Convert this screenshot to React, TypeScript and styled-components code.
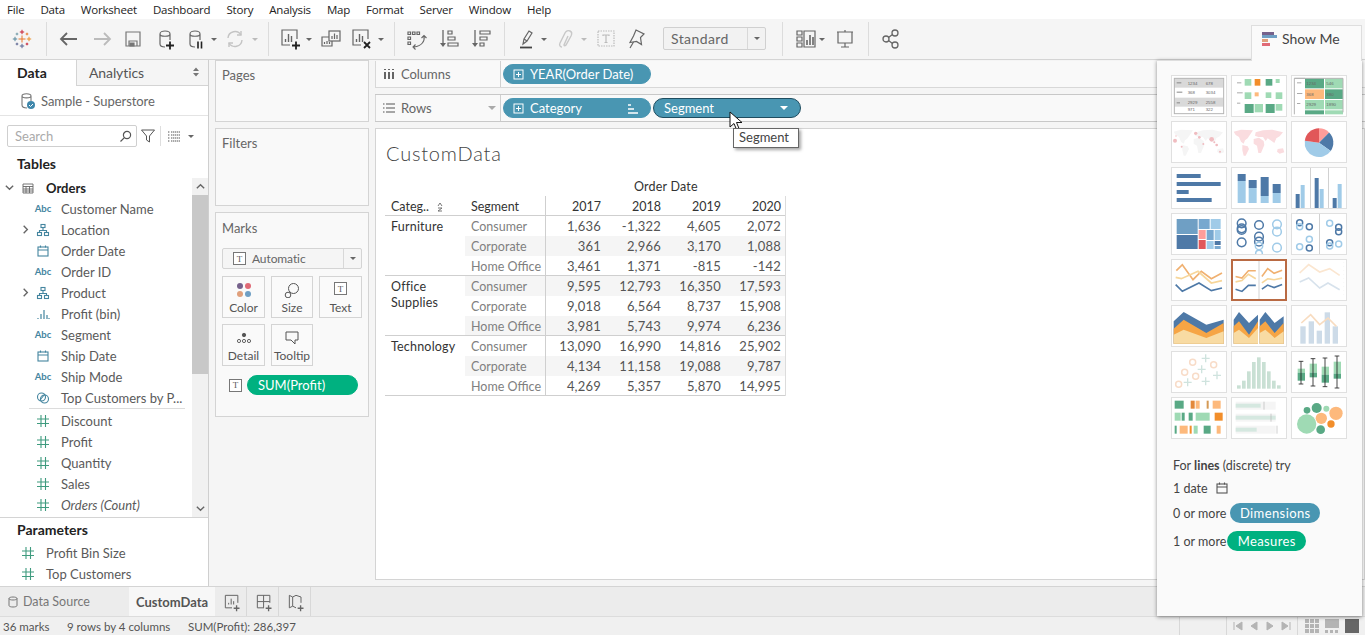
import type { ReactNode } from "react";
import styled, { createGlobalStyle } from "styled-components";

const GlobalStyle = createGlobalStyle`
  html, body {
    margin: 0;
    padding: 0;
    background: #fff;
  }
  * {
    box-sizing: border-box;
  }
`;

const BODY_FONT = `Lato, "Open Sans", Arial, sans-serif`;

const Root = styled.div`
  position: relative;
  width: 1365px;
  height: 635px;
  overflow: hidden;
  display: grid;
  grid-template-rows: 19px 41px 526px 30px 19px;
  font-family: ${BODY_FONT};
  font-size: 13px;
  color: #555;
`;

/* ---------- menu + toolbar ---------- */

const MenuBar = styled.div`
  display: flex;
  align-items: center;
  padding-left: 7px;
  gap: 16px;
  background: #fff;
  font-family: "Open Sans", sans-serif;
  font-size: 11.5px;
  letter-spacing: -0.2px;
  color: #222;
`;

const Toolbar = styled.div`
  display: flex;
  align-items: center;
  padding-left: 10px;
  background: #f5f5f5;
  border-bottom: 1px solid #d4d4d4;
`;

const Tool = styled.div<{ $ml?: number; $w?: number }>`
  flex: none;
  display: flex;
  align-items: center;
  justify-content: center;
  width: ${(p) => p.$w ?? 24}px;
  height: 24px;
  margin-left: ${(p) => p.$ml ?? 0}px;
`;

const ToolSep = styled.div<{ $ml: number }>`
  flex: none;
  width: 1px;
  height: 34px;
  margin-left: ${(p) => p.$ml}px;
  background: #dcdcdc;
`;

const Caret = styled.span<{ $color?: string; $size?: number; $mr?: number }>`
  display: inline-block;
  width: 0;
  height: 0;
  margin-right: ${(p) => p.$mr ?? 0}px;
  border-left: ${(p) => p.$size ?? 3}px solid transparent;
  border-right: ${(p) => p.$size ?? 3}px solid transparent;
  border-top: ${(p) => p.$size ?? 3}px solid ${(p) => p.$color ?? "#666"};
`;

const Combo = styled.div`
  flex: none;
  display: flex;
  align-items: center;
  width: 103px;
  height: 23px;
  margin: 0 0 1px 15px;
  border: 1px solid #d0d0d0;
  border-radius: 2px;
  background: #f2f2f2;
  font-size: 14px;
  letter-spacing: 0.4px;
  color: #666;
`;

const ComboText = styled.span`
  flex: 1;
  padding-left: 7px;
`;

const ComboBtn = styled.span`
  display: flex;
  align-items: center;
  justify-content: center;
  width: 18px;
  height: 100%;
  border-left: 1px solid #d8d8d8;
`;

/* ---------- main area ---------- */

const Main = styled.div`
  display: flex;
  min-height: 0;
  background: #f5f5f5;
`;

const DataPane = styled.div`
  flex: none;
  display: flex;
  flex-direction: column;
  width: 209px;
  background: #fff;
  border-right: 1px solid #cfcfcf;
`;

const PaneTabs = styled.div`
  display: flex;
  height: 26px;
  flex: none;
`;

const DataTab = styled.div`
  width: 76px;
  padding: 4px 0 0 17px;
  font-size: 14px;
  font-weight: 700;
  color: #222;
`;

const AnalyticsTab = styled.div`
  flex: 1;
  display: flex;
  justify-content: space-between;
  padding: 4px 8px 0 12px;
  background: #f5f5f5;
  border-left: 1px solid #d4d4d4;
  border-bottom: 1px solid #d4d4d4;
  font-size: 14px;
  letter-spacing: -0.1px;
  color: #555;
`;

const SourceRow = styled.div`
  flex: none;
  display: flex;
  align-items: center;
  gap: 5px;
  height: 30px;
  padding-left: 20px;
  border-bottom: 1px solid #e4e4e4;
  letter-spacing: -0.05px;
  color: #666;
`;

const SearchRow = styled.div`
  flex: none;
  display: flex;
  align-items: center;
  height: 39px;
  padding: 1px 0 0 7px;
`;

const SearchBox = styled.div`
  display: flex;
  align-items: center;
  justify-content: space-between;
  width: 130px;
  height: 22px;
  padding: 0 4px 0 7px;
  border: 1px solid #cfcfcf;
  border-radius: 2px;
  color: #aaa;
`;

const VSep = styled.span`
  width: 1px;
  height: 20px;
  margin: 0 6px 0 4px;
  background: #dedede;
`;

const SectionTitle = styled.div`
  flex: none;
  height: 22px;
  padding-left: 17px;
  font-size: 14px;
  line-height: 18px;
  font-weight: 700;
  color: #222;
`;

const ParamsTitle = styled(SectionTitle)`
  height: 21px;
`;

const FieldsArea = styled.div`
  flex: none;
  display: flex;
  height: 341px;
  border-bottom: 1px solid #d4d4d4;
`;

const FieldList = styled.div`
  flex: 1;
  min-width: 0;
`;

const FieldRow = styled.div<{ $indent?: number }>`
  display: flex;
  align-items: center;
  height: 21px;
  padding-left: ${(p) => p.$indent ?? 34}px;
  position: relative;
  white-space: nowrap;
`;

const FieldIcon = styled.span`
  flex: none;
  display: flex;
  align-items: center;
  justify-content: center;
  width: 18px;
  margin-right: 9px;
`;

const AbcIcon = styled.span`
  font-size: 9.5px;
  font-weight: 700;
  color: #44859f;
  letter-spacing: -0.1px;
`;

const FieldName = styled.span<{ $italic?: boolean; $bold?: boolean }>`
  font-style: ${(p) => (p.$italic ? "italic" : "normal")};
  font-weight: ${(p) => (p.$bold ? 700 : 400)};
  color: ${(p) => (p.$bold ? "#222" : "#5a5a5a")};
`;

const Expander = styled.span<{ $left?: number }>`
  position: absolute;
  left: ${(p) => p.$left ?? 20}px;
  top: 5px;
  display: flex;
`;

const FieldDivider = styled.div`
  height: 1px;
  margin: 0 0 1px 29px;
  width: 156px;
  background: #dcdcdc;
`;

const ScrollTrack = styled.div`
  flex: none;
  display: flex;
  flex-direction: column;
  width: 16px;
  margin-top: 1px;
  background: #f1f1f1;
`;

const ScrollEnd = styled.div`
  flex: none;
  display: flex;
  align-items: center;
  justify-content: center;
  height: 17px;
`;

const ScrollThumb = styled.div`
  flex: none;
  height: 179px;
  background: #c8c8c8;
`;

const ScrollRest = styled.div`
  flex: 1;
`;

const ParamsArea = styled.div`
  flex: 1;
  padding-top: 3px;
`;

/* ---------- cards column ---------- */

const CardsColumn = styled.div`
  flex: none;
  display: flex;
  flex-direction: column;
  width: 166px;
  padding: 0 6px;
  gap: 6px;
`;

const Card = styled.div<{ $h: number; $pt?: number }>`
  flex: none;
  height: ${(p) => p.$h}px;
  padding: ${(p) => p.$pt ?? 6}px 6px 0;
  background: #f9f9f9;
  border: 1px solid #d4d4d4;
  color: #666;
`;

const MarksType = styled.div`
  display: flex;
  align-items: center;
  width: 140px;
  height: 21px;
  margin-top: 12px;
  border: 1px solid #d4d4d4;
  border-radius: 2px;
  background: #f5f5f5;
  font-size: 12px;
  letter-spacing: -0.1px;
  color: #666;
`;

const MarksTypeLabel = styled.span`
  flex: 1;
  display: flex;
  align-items: center;
  gap: 6px;
  padding-left: 10px;
`;

const MarksTypeBtn = styled.span`
  display: flex;
  align-items: center;
  justify-content: center;
  width: 18px;
  height: 100%;
  border-left: 1px solid #d8d8d8;
`;

const MarksGrid = styled.div`
  display: grid;
  grid-template-columns: 43px 42px 43px;
  grid-auto-rows: 42px;
  column-gap: 6px;
  row-gap: 6px;
  margin-top: 7px;
`;

const MarkButton = styled.div`
  display: flex;
  flex-direction: column;
  align-items: center;
  justify-content: space-between;
  padding: 5px 0 2px;
  border: 1px solid #d4d4d4;
  background: #fafafa;
  font-size: 12px;
  color: #555;
`;

const MarkField = styled.div`
  display: flex;
  align-items: center;
  gap: 5px;
  margin: 9px 0 0 7px;
`;

const TBox = styled.span<{ $size?: number }>`
  display: inline-flex;
  align-items: center;
  justify-content: center;
  width: ${(p) => p.$size ?? 13}px;
  height: ${(p) => p.$size ?? 13}px;
  border: 1px solid #777;
  font-family: "Liberation Serif", serif;
  font-size: ${(p) => (p.$size ?? 13) - 4}px;
  color: #555;
  background: #fff;
`;

const Pill = styled.div<{
  $w: number;
  $tone: "blue" | "green";
  $active?: boolean;
}>`
  flex: none;
  display: flex;
  align-items: center;
  gap: 6px;
  width: ${(p) => p.$w}px;
  height: 20px;
  padding: 0 11px 0 10px;
  border-radius: 10px;
  border: 1px solid
    ${(p) =>
      p.$active ? "#1f4d60" : p.$tone === "blue" ? "#4996b2" : "#00b180"};
  background: ${(p) => (p.$tone === "blue" ? "#4996b2" : "#00b180")};
  color: #fff;
  font-size: 13px;
  white-space: nowrap;
`;

const PillIcon = styled.span`
  display: flex;
  margin-left: -1px;
`;

const PillSpacer = styled.span`
  flex: 1;
`;

/* ---------- workspace ---------- */

const Workspace = styled.div`
  flex: 1;
  min-width: 0;
  display: flex;
  flex-direction: column;
  padding-top: 1px;
`;

const Shelf = styled.div<{ $h: number; $dark?: boolean }>`
  flex: none;
  display: flex;
  height: ${(p) => p.$h}px;
  margin-bottom: 6px;
  background: #f9f9f9;
  border-top: ${(p) => (p.$dark ? "1px solid #c8c8c8" : "none")};
  border-bottom: 1px solid ${(p) => (p.$dark ? "#c8c8c8" : "#d8d8d8")};
`;

const ShelfLabel = styled.div`
  flex: none;
  display: flex;
  align-items: center;
  gap: 5px;
  width: 126px;
  padding: 0 4px 0 6px;
  border-right: 1px solid #d0d0d0;
  border-left: 1px solid #d8d8d8;
  letter-spacing: -0.05px;
  color: #666;
`;

const ShelfPills = styled.div`
  display: flex;
  align-items: center;
  gap: 2px;
  padding-left: 2px;
`;

const View = styled.div`
  flex: none;
  height: 452px;
  padding: 11px 0 0 9px;
  background: #fff;
  border: 1px solid #d4d4d4;
`;

const ViewTitle = styled.div`
  height: 39px;
  padding-left: 1px;
  font-size: 20px;
  font-weight: 300;
  line-height: 26px;
  letter-spacing: 0.8px;
  color: #444;
`;

const TopHeader = styled.div`
  width: 400px;
  height: 17px;
  padding-left: 249px;
  font-size: 12.5px;
  line-height: 16px;
  letter-spacing: 0.2px;
  color: #333;
`;

const CrossTab = styled.div`
  display: grid;
  grid-template-columns: 80px 81px 59px 60px 60px 60px;
  grid-auto-rows: 20px;
  width: 401px;
  border-right: 1px solid #dcdcdc;
`;

const HeadCell = styled.div<{ $right?: boolean; $rule?: boolean }>`
  display: flex;
  align-items: center;
  justify-content: ${(p) => (p.$right ? "flex-end" : "flex-start")};
  gap: 6px;
  padding: 2px 4px 0 ${(p) => (p.$right ? 0 : "6px")};
  border-bottom: 1px solid #cfcfcf;
  border-right: ${(p) => (p.$rule ? "1px solid #cfcfcf" : "none")};
  font-size: 12.5px;
  color: #333;
`;

const CategoryCell = styled.div`
  grid-row: span 3;
  padding: 3px 0 0 6px;
  border-bottom: 1px solid #cfcfcf;
  font-size: 12.5px;
  line-height: 16px;
  letter-spacing: 0.2px;
  color: #333;
`;

const SegmentCell = styled.div<{ $band: boolean; $end: boolean }>`
  display: flex;
  align-items: center;
  padding-left: 6px;
  padding-top: ${(p) => (p.$end ? 1 : 0)}px;
  background: ${(p) => (p.$band ? "#f5f5f5" : "#fff")};
  border-right: 1px solid #cfcfcf;
  border-bottom: ${(p) => (p.$end ? "1px solid #cfcfcf" : "none")};
  font-size: 12.5px;
  color: #808080;
`;

const ValueCell = styled.div<{ $band: boolean; $end: boolean }>`
  display: flex;
  align-items: center;
  justify-content: flex-end;
  padding-right: 4px;
  padding-top: ${(p) => (p.$end ? 1 : 0)}px;
  background: ${(p) => (p.$band ? "#f5f5f5" : "#fff")};
  border-bottom: ${(p) => (p.$end ? "1px solid #cfcfcf" : "none")};
  font-size: 13px;
  letter-spacing: 0.2px;
  color: #555;
`;

/* ---------- show me ---------- */

const ShowMeWrap = styled.div`
  position: absolute;
  left: 1157px;
  top: 25px;
  width: 205px;
  height: 591px;
  display: flex;
  flex-direction: column;
  align-items: flex-end;
`;

const ShowMeTab = styled.div`
  flex: none;
  display: flex;
  align-items: center;
  gap: 4px;
  width: 111px;
  height: 36px;
  margin-bottom: -1px;
  padding: 0 0 10px 10px;
  background: #fafafa;
  border: 1px solid #dedede;
  border-bottom: none;
  position: relative;
  z-index: 1;
  font-size: 14px;
  color: #444;
`;

const ShowMeBody = styled.div`
  flex: 1;
  width: 100%;
  padding: 14px 0 0 14px;
  background: #fafafa;
  border-top: 1px solid #dedede;
  box-shadow: 0 1px 4px rgba(0, 0, 0, 0.45);
`;

const ThumbGrid = styled.div`
  display: grid;
  grid-template-columns: repeat(3, 56px);
  grid-auto-rows: 42px;
  gap: 4px;
`;

const Thumb = styled.div<{ $selected?: boolean }>`
  background: #fff;
  border: ${(p) =>
    p.$selected ? "2px solid #b96a43" : "1px solid #e0e0e0"};
  svg {
    display: block;
    width: 100%;
    height: 100%;
  }
`;

const Hint = styled.div`
  margin-top: 16px;
  padding-left: 2px;
  color: #444;
  font-size: 12.5px;
`;

const HintLine = styled.div<{ $mt: number; $gap?: number }>`
  display: flex;
  align-items: center;
  gap: ${(p) => p.$gap ?? 4}px;
  height: 20px;
  margin-top: ${(p) => p.$mt}px;
`;

const HintPill = styled.span<{ $w: number; $tone: "blue" | "green" }>`
  display: flex;
  align-items: center;
  justify-content: center;
  width: ${(p) => p.$w}px;
  height: 20px;
  border-radius: 10px;
  background: ${(p) => (p.$tone === "blue" ? "#4996b2" : "#00b180")};
  color: #fff;
  font-size: 13px;
  letter-spacing: 0.4px;
`;

/* ---------- bottom ---------- */

const SheetTabs = styled.div`
  display: flex;
  background: #ececec;
  border-top: 1px solid #d4d4d4;
`;

const DataSourceTab = styled.div`
  display: flex;
  align-items: center;
  gap: 3px;
  width: 129px;
  padding-left: 6px;
  font-size: 12.5px;
  color: #777;
`;

const SheetTab = styled.div`
  display: flex;
  align-items: center;
  justify-content: center;
  width: 86px;
  background: #f7f7f7;
  font-weight: 700;
  color: #555;
`;

const NewSheet = styled.div`
  display: flex;
  align-items: center;
  justify-content: center;
  width: 32px;
  padding-left: 2px;
  border-right: 1px solid #d8d8d8;
`;

const StatusBar = styled.div`
  display: flex;
  align-items: center;
  padding-left: 3px;
  background: #f0f0f0;
  border-top: 1px solid #dcdcdc;
  font-size: 11.5px;
  color: #555;
`;

const StatusText = styled.span<{ $w: number }>`
  width: ${(p) => p.$w}px;
  white-space: nowrap;
`;

const StatusSpacer = styled.div`
  flex: 1;
  align-self: stretch;
`;

const StatusCell = styled.div<{ $w: number }>`
  display: flex;
  align-items: center;
  justify-content: center;
  gap: 6px;
  width: ${(p) => p.$w}px;
  align-self: stretch;
  border-left: 1px solid #d8d8d8;
`;

/* ---------- overlays ---------- */

const Cursor = styled.svg`
  position: absolute;
  left: 729px;
  top: 111px;
`;

const Tip = styled.div`
  position: absolute;
  left: 733px;
  top: 128px;
  width: 66px;
  height: 20px;
  padding-left: 5px;
  background: #fff;
  border: 1px solid #666;
  box-shadow: 2px 2px 3px rgba(0, 0, 0, 0.35);
  font-size: 13px;
  line-height: 17px;
  color: #444;
`;

/* ---------- icons ---------- */

const I = ({ c = "#666", w = 1.2, s = 24, vb = 24, children }: { c?: string; w?: number; s?: number; vb?: number; children: ReactNode }) => (
  <svg width={s} height={s} viewBox={`0 0 ${vb} ${vb}`} fill="none" stroke={c} strokeWidth={w}>
    {children}
  </svg>
);

const logoMarks: [number, number, number, string][] = [
  [12, 12, 3.5, "#e8762b"],
  [12, 5, 2.2, "#c72035"],
  [12, 19, 2.2, "#5b6591"],
  [5, 12, 2.2, "#59879b"],
  [19, 12, 2.2, "#eb912b"],
  [7, 7, 1.3, "#7099a6"],
  [17, 7, 1.3, "#e8762b"],
  [7, 17, 1.3, "#5b6591"],
  [17, 17, 1.3, "#c72035"],
];

const LogoIcon = () => (
  <I w={1}>
    {logoMarks.map(([x, y, a, col]) => (
      <path key={`${x}-${y}`} d={`M${x - a} ${y}H${x + a}M${x} ${y - a}V${y + a}`} stroke={col} />
    ))}
  </I>
);

const CylinderPath = "M7 7c0-4 10-4 10 0v6M7 7c0 3 10 3 10 0M7 7v10c0 2 2 3 5 3";

const DsPlus = () => (
  <I>
    <path d={CylinderPath} />
    <path d="M13 18.500h8M17 14.500v8" stroke="#222" strokeWidth={1.8} />
  </I>
);

const DsPause = () => (
  <I>
    <path d={CylinderPath} />
    <path d="M15 14.500v7M18.500 14.500v7" stroke="#222" strokeWidth={1.6} />
  </I>
);

const Refresh = () => (
  <I c="#c4c4c4" w={1.4}>
    <path d="M5 11a7 7 0 0 1 13-3M19 13a7 7 0 0 1-13 3" />
    <path d="M18 4v4h-4M6 20v-4h4" />
  </I>
);

const ChartBox = ({ children }: { children?: ReactNode }) => (
  <I>
    <path d="M19 12V3H4v15h8" />
    <path d="M7.500 15v-3M10.500 15V7M13.500 15v-6" strokeWidth={1.4} />
    {children}
  </I>
);

const DupIcon = () => (
  <I>
    <rect x="10" y="4" width="11" height="10" />
    <path d="M13 12V9M15.500 12V6.500M18 12V8" />
    <path d="M10 10H3v9h10v-5" />
    <path d="M5.500 17v-2M8 17v-3M10.500 17v-2" />
  </I>
);

const SwapIcon = () => (
  <I>
    <path d="M4 5h2.500v2.500H4zM8.500 5H11v2.500H8.500zM13 5h2.500v2.500H13zM4 10h2.500v2.500H4zM4 15h2.500v2.500H4z" />
    <path d="M20 9c1 5-2 10-10 11M11.500 17.500l-2.500 2.500 2.500 2.500M17.500 11l2.500-2.500 2.500 2.500" strokeWidth={1.1} />
  </I>
);

const SortIcon = ({ desc }: { desc?: boolean }) => (
  <I>
    <path d="M6 3v15" strokeWidth={1.3} />
    <path d="M3 16h6l-3 4z" fill="#666" stroke="none" />
    {desc ? (
      <path d="M11 4h10v3H11zM11 10h7v3h-7zM11 16h4v3h-4z" />
    ) : (
      <path d="M11 4h4v3h-4zM11 10h7v3h-7zM11 16h10v3H11z" />
    )}
  </I>
);

const Highlighter = () => (
  <I>
    <path d="M8 17l1-5 5-8 3 2-5 8zM9 12l3 2" />
    <path d="M5 20.500h12" stroke="#444" strokeWidth={1.8} />
  </I>
);

const Clip = () => (
  <I c="#c8c8c8" w={1.4}>
    <path d="M9 20c-2 0-3-2-2-4l5-10c1-2 3-3 5-2s2 3 1 5l-5 9c-1 1-2 1-2 0l4-9" />
  </I>
);

const TDashed = () => (
  <I c="#bbb">
    <rect x="4" y="4" width="16" height="15" strokeDasharray="1.500 1" />
    <path d="M9 9V8h6v1M12 8v7.500M10.500 15.500h3" />
  </I>
);

const Pin = () => (
  <I>
    <path d="M12 3l8 4-3.500 3.500 1 7-5-3-6.500 1 3.500-6.500z" />
    <path d="M9.500 15l-3.500 6" />
  </I>
);

const ShowMeSmall = () => (
  <I>
    <path d="M3 4h5v4H3zM3 10h5v4H3zM3 16h5v4H3z" />
    <path d="M10 4h11v16H10z" />
    <path d="M13 18v-5M16 18V8M19 18v-8" strokeWidth={1.6} />
  </I>
);

const Present = () => (
  <I>
    <path d="M4 5h16M5 5v11h14V5M12 16v4M8 20h8M12 3v2" />
  </I>
);

const Share = () => (
  <I w={1.3}>
    <circle cx="7" cy="12" r="3" />
    <circle cx="16" cy="6" r="3" />
    <circle cx="16" cy="18" r="3" />
    <path d="M9.500 10.500l4-3M9.500 13.500l4 3" />
  </I>
);

const Hash = () => (
  <I s={14} vb={14} c="#3f9b7f" w={1.1}>
    <path d="M5 1v12M9.500 1v12M1 5h12M1 9.500h12" />
  </I>
);

const Calendar = ({ c = "#44859f" }: { c?: string }) => (
  <I s={14} vb={14} c={c} w={1.1}>
    <rect x="2" y="3" width="10" height="9" />
    <path d="M2 6h10M4.500 1.500v2M9.500 1.500v2" />
  </I>
);

const Hierarchy = () => (
  <I s={14} vb={14} c="#44859f" w={1.1}>
    <rect x="5" y="1.500" width="4" height="3" />
    <rect x="1.500" y="9.500" width="4" height="3" />
    <rect x="8.500" y="9.500" width="4" height="3" />
    <path d="M7 4.500v3M3.500 9.500v-2h7v2" />
  </I>
);

const BinBars = () => (
  <I s={14} vb={14} c="#44859f" w={1.2}>
    <path d="M2 12v-1M5 12V7M8 12V3M11 12V8M13 12v-1" />
  </I>
);

const SetIcon = () => (
  <I s={14} vb={14} c="#44859f" w={1.1}>
    <circle cx="5.500" cy="6" r="4" />
    <circle cx="8.500" cy="8" r="4" />
    <path d="M4 9l5-6" />
  </I>
);

const TableIcon = () => (
  <I s={14} vb={14} c="#666" w={0.9}>
    <path d="M2 3h10v9H2zM2 5.500h10M2 8h10M2 10h10M5 5.500V12M8.500 5.500V12" />
  </I>
);

const Chevron = ({ dir }: { dir: "right" | "down" | "up" }) => {
  const d = dir === "right" ? "M4 2l4 4-4 4" : dir === "down" ? "M2 4l4 4 4-4" : "M2 8l4-4 4 4";
  return (
    <I s={11} vb={12} c="#666" w={1.5}>
      <path d={d} />
    </I>
  );
};

const UpDown = () => (
  <svg width="8" height="16" viewBox="0 0 8 16" fill="#777">
    <path d="M1 7l3-3.500L7 7zM1 9l3 3.500L7 9z" />
  </svg>
);

const Magnifier = () => (
  <I s={13} vb={13} c="#555" w={1.2}>
    <circle cx="8" cy="5" r="3.600" />
    <path d="M5.400 7.600L1.500 11.500" />
  </I>
);

const Funnel = () => (
  <I s={16} vb={16} c="#555" w={1}>
    <path d="M1.500 2h13L9.500 8v6l-3-2V8z" />
  </I>
);

const ListIcon = () => (
  <I s={14} vb={14} c="#555" w={1.1}>
    <path d="M1 3h2M4 3h9M1 6h2M4 6h9M1 9h2M4 9h9M1 12h2M4 12h9" strokeDasharray="1.400 0.600" />
  </I>
);

const DbCheck = () => (
  <svg width="16" height="18" viewBox="0 0 16 18" fill="none">
    <path d="M2 4c0-3 9-3 9 0v5M2 4c0 2.500 9 2.500 9 0M2 4v9c0 2 2 3 5 3" stroke="#777" strokeWidth="1.100" />
    <circle cx="11" cy="13" r="4" fill="#3f87ab" />
    <path d="M9 13l1.500 1.500 2.500-2.500" stroke="#fff" strokeWidth="1" />
  </svg>
);

const ColumnsGlyph = () => (
  <I s={14} vb={14} c="#555" w={1.8}>
    <path d="M3 5v7M7 5v7M11 5v7" />
    <path d="M3 2v1M7 2v1M11 2v1" />
  </I>
);

const RowsGlyph = () => (
  <I s={14} vb={14} c="#555" w={1.2}>
    <path d="M4 3h9M4 7h9M4 11h9M1 3h1.500M1 7h1.500M1 11h1.500" />
  </I>
);

const PlusBox = () => (
  <PillIcon>
    <I s={11} vb={11} c="#fff" w={1}>
      <rect x="1" y="1" width="9" height="9" />
      <path d="M3 5.500h5M5.500 3v5" />
    </I>
  </PillIcon>
);

const SortedBars = () => (
  <I s={12} vb={12} c="#fff" w={1.600}>
    <path d="M1 3h3M1 7h6M1 11h10" />
  </I>
);

const ColorDots = () => (
  <svg width="16" height="16" viewBox="0 0 16 16">
    <circle cx="4" cy="4" r="3" fill="#76628c" />
    <circle cx="12" cy="4" r="3" fill="#e06a76" />
    <circle cx="4" cy="12" r="3" fill="#e0a07c" />
    <circle cx="12" cy="12" r="3" fill="#6f9fc4" />
  </svg>
);

const SizeGlyph = () => (
  <I s={16} vb={16} c="#555" w={1}>
    <circle cx="9.500" cy="6.500" r="5" />
    <circle cx="4" cy="13" r="2.800" fill="#fafafa" />
  </I>
);

const DetailGlyph = () => (
  <svg width="16" height="16" viewBox="0 0 16 16" fill="none" stroke="#555" strokeWidth="0.900">
    <circle cx="8" cy="5" r="1.700" fill="#555" />
    <circle cx="3" cy="11" r="1.600" />
    <circle cx="8" cy="11" r="1.600" />
    <circle cx="13" cy="11" r="1.600" />
  </svg>
);

const TooltipGlyph = () => (
  <I s={16} vb={16} c="#555" w={1}>
    <path d="M2 2h12v8h-3v4l-4-4H2z" />
  </I>
);

const ShowMeGlyph = () => (
  <svg width="16" height="16" viewBox="0 0 16 16">
    <rect x="0" y="1" width="12" height="3" fill="#76628c" />
    <rect x="0" y="4" width="15" height="3" fill="#6f9fc4" />
    <rect x="0" y="8" width="6" height="3" fill="#e0a07c" />
    <rect x="0" y="12" width="8" height="3" fill="#e06a76" />
  </svg>
);

const DbSmall = () => (
  <I s={14} vb={14} c="#777" w={1}>
    <path d="M3 3.500c0-2 8-2 8 0v7c0 2-8 2-8 0zM3 3.500c0 2 8 2 8 0" />
  </I>
);

const NewWs = () => (
  <I s={20} vb={24} c="#666">
    <path d="M19 13V4H4v15h8" />
    <path d="M8 15v-2M11 15V8M14 15v-4" />
    <path d="M14 19.500h7M17.500 16v7" strokeWidth={1.600} />
  </I>
);

const NewDash = () => (
  <I s={20} vb={24} c="#666">
    <path d="M12 19H4V4h15v9M4 11.500h15M11.500 4v15" />
    <path d="M14 19.500h7M17.500 16v7" strokeWidth={1.600} />
  </I>
);

const NewStory = () => (
  <I s={20} vb={24} c="#666">
    <path d="M12 19l-4-2-4 2V4l4 2 4-2 6 2v7M8 6v11" />
    <path d="M14 19.500h7M17.500 16v7" strokeWidth={1.600} />
  </I>
);

const NavGlyph = ({ d }: { d: string }) => (
  <svg width="10" height="10" viewBox="0 0 10 10" fill="#b4b4b4" stroke="#b4b4b4">
    <path d={d} />
  </svg>
);

const ViewGrid = ({ n, gap, c }: { n: number; gap: number; c: string }) => (
  <svg width="14" height="14" viewBox="0 0 14 14" fill={c}>
    {Array.from({ length: n * n }).map((_, i) => {
      const size = (14 - gap * (n - 1)) / n;
      return (
        <rect
          key={i}
          x={(i % n) * (size + gap)}
          y={Math.floor(i / n) * (size + gap)}
          width={size}
          height={size}
        />
      );
    })}
  </svg>
);

const FitGlyph = () => (
  <svg width="14" height="14" viewBox="0 0 14 14" fill="#b4b4b4">
    <rect x="0" y="0" width="14" height="9" />
    <rect x="0" y="11" width="3" height="3" />
    <rect x="5" y="11" width="3" height="3" />
    <rect x="10" y="11" width="3" height="3" />
  </svg>
);

const CursorIcon = () => (
  <Cursor width="14" height="21" viewBox="0 0 14 21">
    <path d="M1 1v15l4-3.500 2.500 6 2.500-1-2.500-6H13z" fill="#fff" stroke="#111" strokeWidth="1" />
  </Cursor>
);

/* ---------- show me thumbnails (coordinates are in thirds of a pixel) ---------- */

const BLUE = "#4e79a7";
const SKY = "#a0cbe8";
const MID = "#78a8cf";
const RED = "#e15759";
const PINK = "#ff9d9a";
const GD = "#59a985";
const GL = "#9fdab4";
const OR = "#f28e2b";
const PE = "#fdb97c";

type R = [number, number, number, number, string];

const Rects = ({ list }: { list: R[] }) => (
  <>
    {list.map(([x, y, w, h, f], i) => (
      <rect key={i} x={x} y={y} width={w} height={h} fill={f} />
    ))}
  </>
);

const Poly = ({ pts, c, w = 5 }: { pts: string; c: string; w?: number }) => (
  <polyline points={pts} fill="none" stroke={c} strokeWidth={w} />
);

const Area = ({ pts, c }: { pts: string; c: string }) => <polygon points={pts} fill={c} />;

const Rings = ({ list }: { list: [number, number, number, string][] }) => (
  <>
    {list.map(([x, y, r, c], i) => (
      <circle key={i} cx={x} cy={y} r={r} fill="none" stroke={c} strokeWidth={4.500} />
    ))}
  </>
);

const Discs = ({ list }: { list: [number, number, number, string][] }) => (
  <>
    {list.map(([x, y, r, c], i) => (
      <circle key={i} cx={x} cy={y} r={r} fill={c} />
    ))}
  </>
);

const Svg = ({ children }: { children: ReactNode }) => (
  <svg viewBox="3 3 162 120" preserveAspectRatio="none">
    {children}
  </svg>
);

const worldMap =
  "M8 32L30 26L66 28L58 40L50 52L42 58L38 68L30 62L24 48L14 42Z" +
  "M34 72L50 76L54 84L44 104L38 104L34 88Z" +
  "M74 34L96 28L124 26L156 34L146 46L136 52L130 66L122 60L110 52L104 60L96 48L82 48L72 44Z" +
  "M68 54L84 50L98 60L100 72L90 96L82 96L78 74L68 68Z" +
  "M140 84L156 82L160 94L146 98L138 92Z";

const pieSlice = (from: number, to: number, cx = 84, cy = 65, r = 43) => {
  const pt = (a: number) => {
    const t = ((a - 90) * Math.PI) / 180;
    return `${cx + r * Math.cos(t)} ${cy + r * Math.sin(t)}`;
  };
  const large = to - from > 180 ? 1 : 0;
  return `M${cx} ${cy}L${pt(from)}A${r} ${r} 0 ${large} 1 ${pt(to)}Z`;
};

const CellText = styled.text`
  font-family: "Liberation Sans", sans-serif;
  font-size: 13px;
  fill: #666;
`;

const thumbs: ReactNode[] = [
  <Svg key="text">
    <Rects list={[[10, 10, 146, 28, "#d9d9d9"], [10, 68, 146, 27, "#d9d9d9"]]} />
    <rect x="10" y="10" width="148" height="106" fill="none" stroke="#b4b4b4" strokeWidth="3" />
    <Rects list={[[17, 22, 14, 3, "#888"], [17, 50, 17, 3, "#888"], [17, 82, 10, 3, "#888"]]} />
    <CellText x="50" y="30">1234</CellText>
    <CellText x="104" y="30">678</CellText>
    <CellText x="50" y="58">368</CellText>
    <CellText x="104" y="58">3034</CellText>
    <CellText x="50" y="86">2929</CellText>
    <CellText x="104" y="86">2558</CellText>
    <CellText x="50" y="108">971</CellText>
    <CellText x="104" y="108">322</CellText>
  </Svg>,
  <Svg key="heat">
    <Rects
      list={[
        [18, 22, 13, 3, "#aaa"], [18, 52, 17, 3, "#aaa"], [18, 83, 10, 3, "#aaa"],
        [41, 12, 20, 20, GL], [71, 12, 17, 20, OR], [104, 12, 20, 20, GD], [134, 12, 12, 12, GL],
        [41, 52, 20, 20, GL], [71, 52, 12, 12, PE], [104, 52, 17, 17, GL], [134, 52, 20, 20, GL],
        [41, 87, 27, 27, GD], [71, 87, 25, 25, GL], [104, 87, 27, 27, GD], [134, 87, 20, 20, GL],
      ]}
    />
  </Svg>,
  <Svg key="highlight">
    <Rects
      list={[
        [42, 10, 57, 30, GD], [102, 10, 54, 30, GL],
        [42, 43, 57, 29, PE], [102, 43, 54, 29, GD],
        [42, 75, 57, 28, GL], [102, 75, 54, 28, GL],
        [42, 106, 57, 12, GD], [102, 106, 54, 12, GL],
        [18, 22, 13, 3, "#aaa"], [18, 54, 16, 3, "#aaa"], [18, 84, 10, 3, "#aaa"],
      ]}
    />
    <path d="M10 118V10h146v102M10 10h32" fill="none" stroke="#b4b4b4" strokeWidth="3" />
    <CellText x="46" y="30">1234</CellText>
    <CellText x="106" y="30">546</CellText>
    <CellText x="46" y="62">368</CellText>
    <CellText x="106" y="62">380</CellText>
    <CellText x="46" y="94">2929</CellText>
    <CellText x="106" y="94">1890</CellText>
  </Svg>,
  <Svg key="symbol-map">
    <path d={worldMap} fill="#f5f5f5" />
    <Discs
      list={[
        [12, 59, 6, "#f0bcc0"], [74, 37, 5, "#f0bcc0"], [85, 49, 4, "#f0bcc0"], [122, 55, 7, "#f0bcc0"],
        [137, 72, 4, "#f0bcc0"], [32, 77, 3, "#f0bcc0"], [147, 92, 3, "#f0bcc0"], [97, 69, 3, "#f0bcc0"],
        [15, 45, 2, "#f0bcc0"], [130, 64, 3, "#f0bcc0"],
      ]}
    />
  </Svg>,
  <Svg key="filled-map">
    <path d={worldMap} fill="#fadcdf" />
  </Svg>,
  <Svg key="pie">
    <path d={pieSlice(0, 45)} fill={PINK} />
    <path d={pieSlice(45, 125)} fill={BLUE} />
    <path d={pieSlice(125, 278)} fill={SKY} />
    <path d={pieSlice(278, 360)} fill={RED} />
  </Svg>,
  <Svg key="hbars">
    <Rects list={[[17, 21, 72, 12, BLUE], [17, 45, 132, 12, BLUE], [17, 69, 36, 12, BLUE], [17, 93, 105, 12, BLUE]]} />
  </Svg>,
  <Svg key="stacked">
    <Rects
      list={[
        [20, 21, 24, 21, BLUE], [20, 42, 24, 66, SKY],
        [53, 39, 24, 24, BLUE], [53, 63, 24, 45, SKY],
        [89, 30, 24, 57, BLUE], [89, 87, 24, 21, SKY],
        [125, 51, 24, 27, BLUE], [125, 78, 24, 30, SKY],
      ]}
    />
  </Svg>,
  <Svg key="side-bars">
    <Rects
      list={[
        [58, 2, 2, 122, "#bbb"], [112, 2, 2, 122, "#bbb"],
        [14, 81, 12, 43, BLUE], [29, 54, 12, 70, SKY],
        [71, 33, 12, 91, BLUE], [86, 66, 12, 58, SKY],
        [125, 93, 12, 31, BLUE], [140, 51, 12, 73, SKY],
      ]}
    />
  </Svg>,
  <Svg key="treemap">
    <Rects
      list={[
        [17, 18, 63, 45, "#6f9fc4"], [17, 66, 63, 42, BLUE],
        [83, 18, 33, 30, MID], [119, 18, 30, 30, SKY],
        [83, 51, 21, 27, PINK], [83, 81, 21, 27, RED],
        [107, 51, 21, 30, MID], [131, 51, 18, 30, SKY],
        [107, 84, 21, 24, SKY], [131, 84, 18, 12, BLUE], [131, 99, 18, 9, MID],
      ]}
    />
  </Svg>,
  <Svg key="circles">
    <Rings
      list={[
        [32, 31, 13, BLUE], [32, 46, 13, BLUE], [32, 51, 13, BLUE], [84, 36, 13, BLUE],
        [138, 34, 13, SKY], [138, 56, 13, SKY], [32, 88, 13, BLUE], [84, 71, 13, BLUE],
        [84, 86, 13, BLUE], [84, 99, 11, SKY], [138, 104, 13, SKY], [84, 122, 10, SKY],
      ]}
    />
  </Svg>,
  <Svg key="side-circles">
    <rect x="84" y="2" width="2" height="122" fill="#bbb" />
    <Rings
      list={[
        [26, 29, 9, BLUE], [26, 41, 9, SKY], [55, 41, 9, BLUE], [55, 79, 9, SKY],
        [55, 105, 9, BLUE], [26, 101, 9, SKY], [116, 31, 9, SKY], [143, 43, 9, BLUE],
        [143, 56, 9, BLUE], [116, 89, 9, BLUE], [116, 99, 9, SKY], [143, 93, 9, SKY],
      ]}
    />
  </Svg>,
  <Svg key="lines">
    <Poly pts="16,35 34,17 66,62 91,37 121,59 153,42" c="#f0b070" />
    <Poly pts="14,55 31,59 81,37 121,72 153,65" c="#f7d69a" />
    <Poly pts="14,77 34,97 84,72 121,95 153,87" c="#4e79a7" />
  </Svg>,
  <Svg key="lines-split">
    <rect x="83" y="2" width="2" height="122" fill="#bbb" />
    <Poly pts="11,52 31,57 51,34 74,34" c="#f0b070" />
    <Poly pts="11,69 31,65 51,45 74,59" c="#f7d69a" />
    <Poly pts="11,92 31,99 51,80 74,80" c="#4e79a7" />
    <Poly pts="93,52 111,27 131,42 156,32" c="#f0b070" />
    <Poly pts="93,72 111,59 131,62 156,57" c="#f7d69a" />
    <Poly pts="93,92 111,79 131,87 156,77" c="#4e79a7" />
  </Svg>,
  <Svg key="dual-lines">
    <Poly pts="26,42 53,17 86,39 116,29 146,49" c="#fbe6d0" />
    <Poly pts="26,69 53,57 86,87 111,72 146,92" c="#d7e2ec" />
    <path d="M158 10v100" stroke="#eee" strokeWidth="2" strokeDasharray="2 10" />
  </Svg>,
  <Svg key="area">
    <Area pts="8,49 38,21 106,59 158,44 158,116 8,116" c={BLUE} />
    <Area pts="8,71 38,44 106,84 158,54 158,116 8,116" c="#f6a545" />
    <Area pts="8,89 38,74 106,99 158,79 158,116 8,116" c="#f8dba3" />
  </Svg>,
  <Svg key="area-split">
    <Area pts="8,44 24,21 54,54 81,29 81,116 8,116" c={BLUE} />
    <Area pts="8,64 24,49 54,89 81,49 81,116 8,116" c="#f6a545" />
    <Area pts="8,84 24,74 54,99 81,69 81,116 8,116" c="#f8dba3" />
    <Area pts="86,44 103,21 131,54 158,34 158,116 86,116" c={BLUE} />
    <Area pts="86,64 103,49 131,84 158,54 158,116 86,116" c="#f6a545" />
    <Area pts="86,84 103,74 131,99 158,79 158,116 86,116" c="#f8dba3" />
  </Svg>,
  <Svg key="combo">
    <Rects
      list={[
        [28, 64, 16, 52, "#cddbe8"], [53, 49, 16, 67, "#cddbe8"], [77, 77, 16, 39, "#cddbe8"],
        [101, 22, 16, 94, "#cddbe8"], [125, 64, 16, 52, "#cddbe8"],
      ]}
    />
    <Poly pts="31,54 59,29 86,59 111,39 136,64" c="#f8dcc0" />
  </Svg>,
  <Svg key="scatter">
    <Rings
      list={[
        [65, 34, 9, "#f8dcc8"], [41, 64, 9, "#f8dcc8"], [23, 100, 9, "#f8dcc8"],
        [74, 76, 9, "#f8dcc8"], [128, 41, 9, "#f8dcc8"],
      ]}
    />
    <path
      d="M92 22h24M104 10v24M80 55h24M92 43v24M38 94h24M50 82v24M126 73h24M138 61v24M92 91h24M104 79v24"
      stroke="#cfe3de"
      strokeWidth="4"
    />
  </Svg>,
  <Svg key="histogram">
    <Rects
      list={[
        [18, 103, 11, 10, "#c9e0d4"], [33, 89, 11, 24, "#c9e0d4"], [48, 61, 11, 52, "#c9e0d4"],
        [63, 33, 11, 80, "#c9e0d4"], [78, 19, 11, 94, "#c9e0d4"], [93, 33, 11, 80, "#c9e0d4"],
        [108, 61, 11, 52, "#c9e0d4"], [123, 89, 11, 24, "#c9e0d4"], [138, 103, 11, 10, "#c9e0d4"],
      ]}
    />
  </Svg>,
  <Svg key="box">
    <Rects
      list={[
        [20, 53, 22, 12, GL], [20, 65, 22, 24, GD],
        [56, 38, 22, 27, GL], [56, 65, 22, 14, GD],
        [92, 47, 22, 24, GL], [92, 71, 22, 24, GD],
        [128, 32, 22, 36, GL], [128, 68, 22, 15, GD],
      ]}
    />
    <path
      d="M30 31v68M23 31h14M23 99h14M66 23v82M59 23h14M59 105h14M102 21v86M95 21h14M95 107h14M138 15v96M131 15h14M131 111h14"
      stroke="#222"
      strokeWidth="2.500"
    />
  </Svg>,
  <Svg key="gantt">
    <Rects
      list={[
        [11, 11, 27, 24, GD], [59, 11, 12, 24, "#e3883a"], [74, 11, 12, 24, PE], [107, 11, 6, 24, "#d49a56"], [125, 11, 24, 24, PE],
        [11, 47, 18, 24, GL], [32, 47, 9, 24, GD], [53, 47, 12, 24, GD], [74, 47, 42, 24, GL], [131, 47, 24, 24, OR],
        [11, 86, 6, 24, GD], [26, 86, 24, 24, PE], [56, 86, 6, 24, OR], [68, 86, 12, 24, GL], [98, 86, 21, 24, GD], [137, 86, 12, 24, PE],
      ]}
    />
  </Svg>,
  <Svg key="bullet">
    <Rects
      list={[
        [14, 14, 120, 24, "#f5f5f5"], [14, 20, 75, 12, "#d5e8e0"], [98, 14, 2, 24, "#b8b8b8"],
        [14, 50, 120, 24, "#f5f5f5"], [14, 56, 120, 12, "#d5e8e0"], [119, 50, 2, 24, "#b8b8b8"],
        [14, 86, 120, 24, "#f5f5f5"], [14, 92, 63, 12, "#d5e8e0"], [137, 86, 2, 24, "#b8b8b8"],
      ]}
    />
  </Svg>,
  <Svg key="bubbles">
    <Discs
      list={[
        [47, 81, 29, GL], [91, 64, 17, PE], [135, 49, 20, PE], [77, 33, 15, GD],
        [48, 40, 10, GD], [106, 35, 9, GL], [120, 81, 11, OR], [89, 98, 13, GD],
      ]}
    />
  </Svg>,
];

/* ---------- data ---------- */

type FieldKind = "abc" | "date" | "geo" | "bin" | "set" | "hash";

const dimensions: { name: string; kind: FieldKind; expand?: boolean }[] = [
  { name: "Customer Name", kind: "abc" },
  { name: "Location", kind: "geo", expand: true },
  { name: "Order Date", kind: "date" },
  { name: "Order ID", kind: "abc" },
  { name: "Product", kind: "geo", expand: true },
  { name: "Profit (bin)", kind: "bin" },
  { name: "Segment", kind: "abc" },
  { name: "Ship Date", kind: "date" },
  { name: "Ship Mode", kind: "abc" },
  { name: "Top Customers by P...", kind: "set" },
];

const measures = ["Discount", "Profit", "Quantity", "Sales"];

const fieldIcon = (k: FieldKind) => {
  switch (k) {
    case "abc":
      return <AbcIcon>Abc</AbcIcon>;
    case "date":
      return <Calendar />;
    case "geo":
      return <Hierarchy />;
    case "bin":
      return <BinBars />;
    case "set":
      return <SetIcon />;
    default:
      return <Hash />;
  }
};

const groups: { name: ReactNode; rows: [string, string[]][] }[] = [
  {
    name: "Furniture",
    rows: [
      ["Consumer", ["1,636", "-1,322", "4,605", "2,072"]],
      ["Corporate", ["361", "2,966", "3,170", "1,088"]],
      ["Home Office", ["3,461", "1,371", "-815", "-142"]],
    ],
  },
  {
    name: (
      <>
        Office
        <br />
        Supplies
      </>
    ),
    rows: [
      ["Consumer", ["9,595", "12,793", "16,350", "17,593"]],
      ["Corporate", ["9,018", "6,564", "8,737", "15,908"]],
      ["Home Office", ["3,981", "5,743", "9,974", "6,236"]],
    ],
  },
  {
    name: "Technology",
    rows: [
      ["Consumer", ["13,090", "16,990", "14,816", "25,902"]],
      ["Corporate", ["4,134", "11,158", "19,088", "9,787"]],
      ["Home Office", ["4,269", "5,357", "5,870", "14,995"]],
    ],
  },
];

const bandedRows = new Set([1, 3, 5, 7]);

const menus = ["File", "Data", "Worksheet", "Dashboard", "Story", "Analysis", "Map", "Format", "Server", "Window", "Help"];

function App() {
  return (
    <Root>
      <GlobalStyle />
      <MenuBar>
        {menus.map((m) => (
          <span key={m}>{m}</span>
        ))}
      </MenuBar>

      <Toolbar>
        <Tool><LogoIcon /></Tool>
        <ToolSep $ml={12} />
        <Tool $ml={10}><I w={1.8}><path d="M4 12h16M10 6l-6 6 6 6" /></I></Tool>
        <Tool $ml={9}><I w={1.8} c="#bbb"><path d="M4 12h16M14 6l6 6-6 6" /></I></Tool>
        <Tool $ml={7}><I c="#777"><path d="M5 5h14v14H5zM8 19v-5h8v5" /><path d="M9 16h4v3H9z" fill="#777" /></I></Tool>
        <Tool $ml={8}><DsPlus /></Tool>
        <Tool $ml={6}><DsPause /></Tool>
        <Tool $ml={3} $w={8}><Caret /></Tool>
        <Tool $ml={5}><Refresh /></Tool>
        <Tool $ml={4} $w={8}><Caret $color="#bbb" /></Tool>
        <ToolSep $ml={9} />
        <Tool $ml={9}>
          <ChartBox><path d="M14 18.500h8M18 14.500v8" stroke="#222" strokeWidth={1.8} /></ChartBox>
        </Tool>
        <Tool $ml={3} $w={8}><Caret /></Tool>
        <Tool $ml={6}><DupIcon /></Tool>
        <Tool $ml={6}>
          <ChartBox><path d="M15 15l6 6M21 15l-6 6" stroke="#222" strokeWidth={1.8} /></ChartBox>
        </Tool>
        <Tool $ml={4} $w={8}><Caret /></Tool>
        <ToolSep $ml={9} />
        <Tool $ml={9}><SwapIcon /></Tool>
        <Tool $ml={9}><SortIcon /></Tool>
        <Tool $ml={8}><SortIcon desc /></Tool>
        <ToolSep $ml={11} />
        <Tool $ml={10}><Highlighter /></Tool>
        <Tool $ml={1} $w={8}><Caret /></Tool>
        <Tool $ml={5}><Clip /></Tool>
        <Tool $ml={3} $w={8}><Caret $color="#bbb" /></Tool>
        <Tool $ml={6}><TDashed /></Tool>
        <Tool $ml={6}><Pin /></Tool>
        <Combo>
          <ComboText>Standard</ComboText>
          <ComboBtn><Caret /></ComboBtn>
        </Combo>
        <ToolSep $ml={16} />
        <Tool $ml={11}><ShowMeSmall /></Tool>
        <Tool $w={8}><Caret /></Tool>
        <Tool $ml={7}><Present /></Tool>
        <ToolSep $ml={11} />
        <Tool $ml={10}><Share /></Tool>
      </Toolbar>

      <Main>
        <DataPane>
          <PaneTabs>
            <DataTab>Data</DataTab>
            <AnalyticsTab>
              Analytics
              <UpDown />
            </AnalyticsTab>
          </PaneTabs>
          <SourceRow>
            <DbCheck />
            Sample - Superstore
          </SourceRow>
          <SearchRow>
            <SearchBox>
              Search
              <Magnifier />
            </SearchBox>
            <Tool $ml={3} $w={16}><Funnel /></Tool>
            <VSep />
            <ListIcon />
            <Tool $ml={5} $w={10}><Caret /></Tool>
          </SearchRow>
          <SectionTitle>Tables</SectionTitle>
          <FieldsArea>
            <FieldList>
              <FieldRow $indent={19}>
                <Expander $left={4}><Chevron dir="down" /></Expander>
                <FieldIcon><TableIcon /></FieldIcon>
                <FieldName $bold>Orders</FieldName>
              </FieldRow>
              {dimensions.map((f) => (
                <FieldRow key={f.name}>
                  {f.expand && <Expander><Chevron dir="right" /></Expander>}
                  <FieldIcon>{fieldIcon(f.kind)}</FieldIcon>
                  <FieldName>{f.name}</FieldName>
                </FieldRow>
              ))}
              <FieldDivider />
              {measures.map((m) => (
                <FieldRow key={m}>
                  <FieldIcon><Hash /></FieldIcon>
                  <FieldName>{m}</FieldName>
                </FieldRow>
              ))}
              <FieldRow>
                <FieldIcon><Hash /></FieldIcon>
                <FieldName $italic>Orders (Count)</FieldName>
              </FieldRow>
            </FieldList>
            <ScrollTrack>
              <ScrollEnd><Chevron dir="up" /></ScrollEnd>
              <ScrollThumb />
              <ScrollRest />
              <ScrollEnd><Chevron dir="down" /></ScrollEnd>
            </ScrollTrack>
          </FieldsArea>
          <ParamsArea>
            <ParamsTitle>Parameters</ParamsTitle>
            <FieldRow $indent={19}>
              <FieldIcon><Hash /></FieldIcon>
              <FieldName>Profit Bin Size</FieldName>
            </FieldRow>
            <FieldRow $indent={19}>
              <FieldIcon><Hash /></FieldIcon>
              <FieldName>Top Customers</FieldName>
            </FieldRow>
          </ParamsArea>
        </DataPane>

        <CardsColumn>
          <Card $h={62}>Pages</Card>
          <Card $h={78}>Filters</Card>
          <Card $h={205} $pt={7}>
            Marks
            <MarksType>
              <MarksTypeLabel>
                <TBox>T</TBox>
                Automatic
              </MarksTypeLabel>
              <MarksTypeBtn><Caret /></MarksTypeBtn>
            </MarksType>
            <MarksGrid>
              <MarkButton><ColorDots />Color</MarkButton>
              <MarkButton><SizeGlyph />Size</MarkButton>
              <MarkButton><TBox>T</TBox>Text</MarkButton>
              <MarkButton><DetailGlyph />Detail</MarkButton>
              <MarkButton><TooltipGlyph />Tooltip</MarkButton>
            </MarksGrid>
            <MarkField>
              <TBox>T</TBox>
              <Pill $w={111} $tone="green">SUM(Profit)</Pill>
            </MarkField>
          </Card>
        </CardsColumn>

        <Workspace>
          <Shelf $h={27}>
            <ShelfLabel>
              <ColumnsGlyph />
              Columns
            </ShelfLabel>
            <ShelfPills>
              <Pill $w={148} $tone="blue"><PlusBox />YEAR(Order Date)</Pill>
            </ShelfPills>
          </Shelf>
          <Shelf $h={28} $dark>
            <ShelfLabel>
              <RowsGlyph />
              Rows
              <PillSpacer />
              <Caret $color="#aaa" $size={4} />
            </ShelfLabel>
            <ShelfPills>
              <Pill $w={148} $tone="blue">
                <PlusBox />
                Category
                <PillSpacer />
                <SortedBars />
              </Pill>
              <Pill $w={148} $tone="blue" $active>
                Segment
                <PillSpacer />
                <Caret $color="#fff" $size={4} $mr={1} />
              </Pill>
            </ShelfPills>
          </Shelf>
          <View>
            <ViewTitle>CustomData</ViewTitle>
            <TopHeader>Order Date</TopHeader>
            <CrossTab>
              <HeadCell>
                Categ..
                <I s={10} vb={10} c="#666" w={0.9}>
                  <path d="M3 4l2-3 2 3M3 6h4L3 9h4" />
                </I>
              </HeadCell>
              <HeadCell $rule>Segment</HeadCell>
              {["2017", "2018", "2019", "2020"].map((y) => (
                <HeadCell key={y} $right>{y}</HeadCell>
              ))}
              {groups.map((g, gi) =>
                g.rows.map(([segment, values], ri) => {
                  const band = bandedRows.has(gi * 3 + ri);
                  const end = ri === g.rows.length - 1;
                  return [
                    ri === 0 && <CategoryCell key={`c${gi}`}>{g.name}</CategoryCell>,
                    <SegmentCell key={`s${gi}${ri}`} $band={band} $end={end}>{segment}</SegmentCell>,
                    ...values.map((v, vi) => (
                      <ValueCell key={`v${gi}${ri}${vi}`} $band={band} $end={end}>{v}</ValueCell>
                    )),
                  ];
                }),
              )}
            </CrossTab>
          </View>
        </Workspace>
      </Main>

      <SheetTabs>
        <DataSourceTab>
          <DbSmall />
          Data Source
        </DataSourceTab>
        <SheetTab>CustomData</SheetTab>
        <NewSheet><NewWs /></NewSheet>
        <NewSheet><NewDash /></NewSheet>
        <NewSheet><NewStory /></NewSheet>
      </SheetTabs>

      <StatusBar>
        <StatusText $w={64}>36 marks</StatusText>
        <StatusText $w={121}>9 rows by 4 columns</StatusText>
        <StatusText $w={140}>SUM(Profit): 286,397</StatusText>
        <StatusSpacer />
        <StatusCell $w={47} />
        <StatusCell $w={71}>
          <NavGlyph d="M1 1v8M9 1L3 5l6 4z" />
          <NavGlyph d="M8 1L2 5l6 4z" />
          <NavGlyph d="M2 1l6 4-6 4z" />
          <NavGlyph d="M9 1v8M1 1l6 4-6 4z" />
        </StatusCell>
        <StatusCell $w={68}>
          <ViewGrid n={3} gap={1} c="#b4b4b4" />
          <FitGlyph />
          <ViewGrid n={1} gap={0} c="#666" />
        </StatusCell>
      </StatusBar>

      <CursorIcon />
      <Tip>Segment</Tip>

      <ShowMeWrap>
        <ShowMeTab>
          <ShowMeGlyph />
          Show Me
        </ShowMeTab>
        <ShowMeBody>
          <ThumbGrid>
            {thumbs.map((t, i) => (
              <Thumb key={i} $selected={i === 13}>{t}</Thumb>
            ))}
          </ThumbGrid>
          <Hint>
            <HintLine $mt={0}>
              <span>For <b>lines</b> (discrete) try</span>
            </HintLine>
            <HintLine $mt={3}>
              <span>1 date</span>
              <Tool $ml={2} $w={16}><Calendar c="#555" /></Tool>
            </HintLine>
            <HintLine $mt={5}>
              0 or more
              <HintPill $w={90} $tone="blue">Dimensions</HintPill>
            </HintLine>
            <HintLine $mt={8} $gap={1}>
              1 or more
              <HintPill $w={79} $tone="green">Measures</HintPill>
            </HintLine>
          </Hint>
        </ShowMeBody>
      </ShowMeWrap>
    </Root>
  );
}

export default App;
